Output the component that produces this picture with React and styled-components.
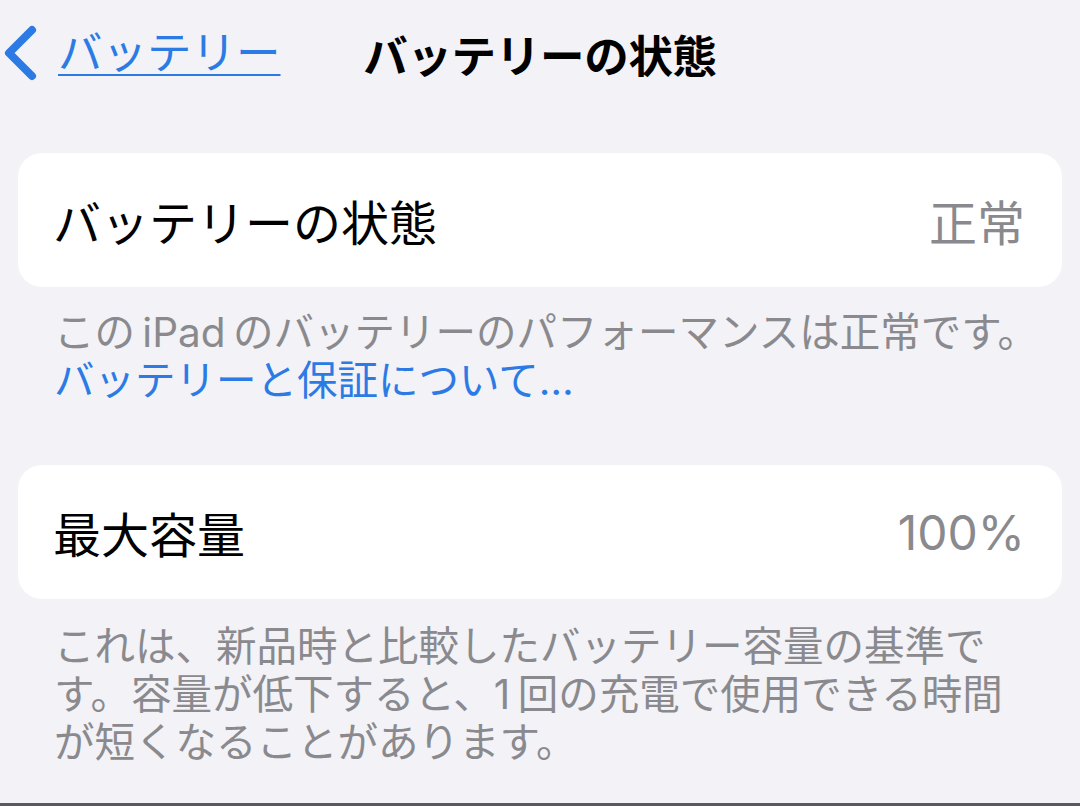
import styled, { createGlobalStyle } from 'styled-components';

const GlobalStyle = createGlobalStyle`
  html, body {
    margin: 0;
    padding: 0;
    background: #f2f2f7;
  }
  body {
    font-family: Inter, "Noto Sans CJK JP", sans-serif;
    -webkit-font-smoothing: antialiased;
  }
`;

const Page = styled.div`
  height: 806px;
  box-sizing: border-box;
  display: flex;
  flex-direction: column;
  padding: 0 18px 0 18px;
  background: #f2f2f7;
  border-bottom: 3px solid #5a5a5e;
  overflow: hidden;
`;

const NavBar = styled.div`
  height: 106px;
  display: grid;
  grid-template-columns: 1fr auto 1fr;
  align-items: center;
  margin: 0 -18px;
  padding: 0 2px;
`;

const BackButton = styled.a`
  display: flex;
  align-items: center;
  gap: 20px;
  color: #2c7be5;
  font-size: 44.5px;
  line-height: 1;
  text-decoration: underline;
  text-decoration-thickness: 2px;
  text-underline-offset: 5px;
  cursor: pointer;

  svg {
    flex: none;
  }
`;

const Title = styled.h1`
  margin: 0;
  font-size: 44.5px;
  font-weight: 700;
  color: #000;
  letter-spacing: -0.3px;
`;

const Card = styled.div`
  margin-top: ${(p) => p.$top}px;
  height: 134px;
  background: #fff;
  border-radius: 24px;
  display: flex;
  align-items: center;
  justify-content: space-between;
  padding: 0 37px 0 35px;
  font-size: 48px;
`;

const Label = styled.span`
  color: #000;
`;

const Value = styled.span`
  color: #8a8a8e;
`;

const Footnote = styled.p`
  margin: 0;
  padding: ${(p) => p.$top}px 36px 0;
  font-size: 40.5px;
  line-height: 48px;
  color: #8a8a8e;
  white-space: nowrap;
`;

const FootLink = styled.span`
  color: #2c7be5;
`;

const Chevron = () => (
  <svg width="36" height="56" viewBox="0 0 36 56">
    <path
      d="M30 5 L7 28 L30 51"
      fill="none"
      stroke="#2c7be5"
      strokeWidth="8"
      strokeLinecap="round"
      strokeLinejoin="round"
    />
  </svg>
);

const App = () => {
  return (
    <Page>
      <GlobalStyle />
      <NavBar>
        <BackButton>
          <Chevron />
          <span>バッテリー</span>
        </BackButton>
        <Title>バッテリーの状態</Title>
        <div />
      </NavBar>

      <Card $top={47}>
        <Label>バッテリーの状態</Label>
        <Value>正常</Value>
      </Card>
      <Footnote $top={22}>
        この{'\u2009'}iPad{'\u2009'}のバッテリーのパフォーマンスは正常です。
        <br />
        <FootLink>バッテリーと保証について…</FootLink>
      </Footnote>

      <Card $top={60}>
        <Label>最大容量</Label>
        <Value>100%</Value>
      </Card>
      <Footnote $top={24}>
        これは、新品時と比較したバッテリー容量の基準で
        <br />
        す。容量が低下すると、1{'\u2009'}回の充電で使用できる時間
        <br />
        が短くなることがあります。
      </Footnote>
    </Page>
  );
};

export default App;
